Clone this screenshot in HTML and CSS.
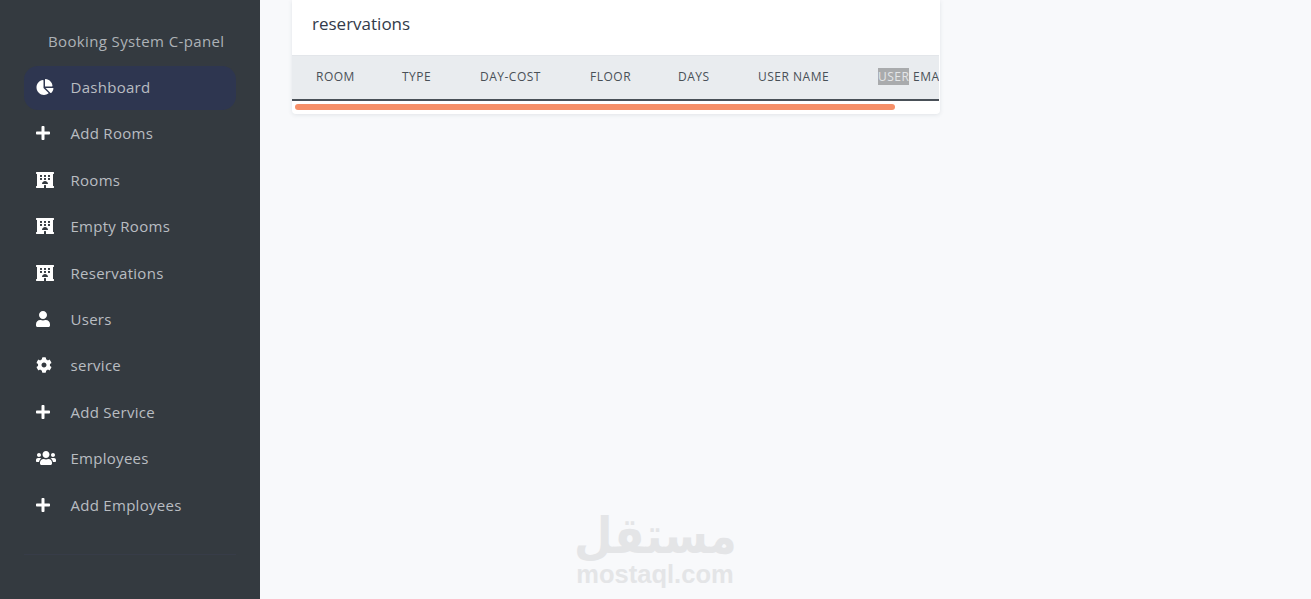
FILE: index.html
```html
<!DOCTYPE html>
<html lang="en">
<head>
<meta charset="utf-8">
<title>Booking System C-panel</title>
<link rel="stylesheet" href="styles.css">
</head>
<body>
<svg class="defs" width="0" height="0" aria-hidden="true">
  <defs>
    <symbol id="i-chart" viewBox="0 0 544 512"><path d="M527.79 288H290.5l158.03 158.03c6.04 6.04 15.98 6.53 22.19.68 38.7-36.46 65.32-85.61 73.13-140.86 1.34-9.46-6.51-17.85-16.06-17.85zm-15.83-64.8C503.72 103.74 408.26 8.28 288.8.04 279.68-.59 272 7.1 272 16.24V240h223.77c9.14 0 16.82-7.68 16.19-16.8zM224 288V50.71c0-9.55-8.39-17.4-17.84-16.06C86.99 51.49-4.1 155.6.14 280.37 4.5 408.51 114.83 513.59 243.03 511.98c50.4-.63 96.97-16.87 135.26-44.03 7.9-5.6 8.42-17.23 1.57-24.08L224 288z"/></symbol>
    <symbol id="i-plus" viewBox="0 0 448 512"><path d="M416 208H272V64c0-17.67-14.33-32-32-32h-32c-17.67 0-32 14.33-32 32v144H32c-17.67 0-32 14.33-32 32v32c0 17.67 14.33 32 32 32h144v144c0 17.67 14.33 32 32 32h32c17.67 0 32-14.33 32-32V304h144c17.67 0 32-14.33 32-32v-32c0-17.67-14.33-32-32-32z"/></symbol>
    <symbol id="i-hotel" viewBox="0 0 576 512"><path d="M560 64c8.84 0 16-7.16 16-16V16c0-8.84-7.16-16-16-16H16C7.16 0 0 7.16 0 16v32c0 8.84 7.16 16 16 16h15.98v384H16c-8.84 0-16 7.16-16 16v32c0 8.84 7.16 16 16 16h240v-80c0-8.8 7.2-16 16-16h32c8.8 0 16 7.2 16 16v80h240c8.84 0 16-7.16 16-16v-32c0-8.84-7.16-16-16-16h-16V64h16zm-304 44.8c0-6.4 6.4-12.8 12.8-12.8h38.4c6.4 0 12.8 6.4 12.8 12.8v38.4c0 6.4-6.4 12.8-12.8 12.8h-38.4c-6.4 0-12.8-6.4-12.8-12.8v-38.4zm0 96c0-6.4 6.4-12.8 12.8-12.8h38.4c6.4 0 12.8 6.4 12.8 12.8v38.4c0 6.4-6.4 12.8-12.8 12.8h-38.4c-6.4 0-12.8-6.4-12.8-12.8v-38.4zm-128-96c0-6.4 6.4-12.8 12.8-12.8h38.4c6.4 0 12.8 6.4 12.8 12.8v38.4c0 6.4-6.4 12.8-12.8 12.8h-38.4c-6.4 0-12.8-6.4-12.8-12.8v-38.4zM179.2 256h-38.4c-6.4 0-12.8-6.4-12.8-12.8v-38.4c0-6.4 6.4-12.8 12.8-12.8h38.4c6.4 0 12.8 6.4 12.8 12.8v38.4c0 6.4-6.4 12.8-12.8 12.8zM192 384c0-53.02 42.98-96 96-96s96 42.98 96 96H192zm256-140.8c0 6.4-6.4 12.8-12.8 12.8h-38.4c-6.4 0-12.8-6.4-12.8-12.8v-38.4c0-6.4 6.4-12.8 12.8-12.8h38.4c6.4 0 12.8 6.4 12.8 12.8v38.4zm0-96c0 6.4-6.4 12.8-12.8 12.8h-38.4c-6.4 0-12.8-6.4-12.8-12.8v-38.4c0-6.4 6.4-12.8 12.8-12.8h38.4c6.4 0 12.8 6.4 12.8 12.8v38.4z"/></symbol>
    <symbol id="i-user" viewBox="0 0 448 512"><path d="M224 256c70.7 0 128-57.3 128-128S294.7 0 224 0 96 57.3 96 128s57.3 128 128 128zm89.6 32h-16.7c-22.2 10.2-46.9 16-72.9 16s-50.6-5.8-72.9-16h-16.7C60.2 288 0 348.2 0 422.4V464c0 26.5 21.5 48 48 48h352c26.5 0 48-21.5 48-48v-41.6c0-74.2-60.2-134.4-134.4-134.4z"/></symbol>
    <symbol id="i-cog" viewBox="0 0 512 512"><path d="M487.4 315.7l-42.6-24.6c4.3-23.2 4.3-47 0-70.2l42.6-24.6c4.9-2.8 7.1-8.6 5.5-14-11.1-35.6-30-67.8-54.7-94.6-3.8-4.1-10-5.1-14.8-2.3L380.8 110c-17.9-15.4-38.5-27.3-60.8-35.1V25.8c0-5.6-3.9-10.5-9.4-11.7-36.7-8.2-74.3-7.8-109.2 0-5.5 1.2-9.4 6.1-9.4 11.7V75c-22.2 7.9-42.8 19.8-60.8 35.1L88.7 85.5c-4.9-2.8-11-1.9-14.8 2.3-24.7 26.7-43.6 58.9-54.7 94.6-1.7 5.4.6 11.2 5.5 14L67.3 221c-4.3 23.2-4.3 47 0 70.2l-42.6 24.6c-4.9 2.8-7.1 8.6-5.5 14 11.1 35.6 30 67.8 54.7 94.6 3.8 4.1 10 5.1 14.8 2.3l42.6-24.6c17.9 15.4 38.5 27.3 60.8 35.1v49.2c0 5.6 3.9 10.5 9.4 11.7 36.7 8.2 74.3 7.8 109.2 0 5.5-1.2 9.4-6.1 9.4-11.7v-49.2c22.2-7.9 42.8-19.8 60.8-35.1l42.6 24.6c4.9 2.8 11 1.9 14.8-2.3 24.7-26.7 43.6-58.9 54.7-94.6 1.5-5.5-.7-11.3-5.6-14.1zM256 336c-44.1 0-80-35.9-80-80s35.9-80 80-80 80 35.9 80 80-35.9 80-80 80z"/></symbol>
    <symbol id="i-users" viewBox="0 0 640 512"><path d="M96 224c35.3 0 64-28.7 64-64s-28.7-64-64-64-64 28.7-64 64 28.7 64 64 64zm448 0c35.3 0 64-28.7 64-64s-28.7-64-64-64-64 28.7-64 64 28.7 64 64 64zm32 32h-64c-17.6 0-33.5 7.1-45.1 18.6 40.3 22.1 68.9 62 75.1 109.4h66c17.7 0 32-14.3 32-32v-32c0-35.3-28.7-64-64-64zm-256 0c61.9 0 112-50.1 112-112S381.9 32 320 32 208 82.1 208 144s50.1 112 112 112zm76.8 32h-8.3c-20.8 10-43.9 16-68.5 16s-47.6-6-68.5-16h-8.3C179.6 288 128 339.6 128 403.2V432c0 26.5 21.5 48 48 48h288c26.5 0 48-21.5 48-48v-28.8c0-63.6-51.6-115.2-115.2-115.2zm-223.7-13.4C161.5 263.1 145.6 256 128 256H64c-35.3 0-64 28.7-64 64v32c0 17.7 14.3 32 32 32h65.9c6.3-47.4 34.9-87.3 75.2-109.4z"/></symbol>
  </defs>
</svg>
<div class="app">
  <aside class="sidebar">
    <div class="brand">Booking System C-panel</div>
    <nav class="nav">
      <a class="nav-item active"><span class="nav-icon"><svg class="w-chart"><use href="#i-chart"/></svg></span>Dashboard</a>
      <a class="nav-item"><span class="nav-icon"><svg class="w-plus"><use href="#i-plus"/></svg></span>Add Rooms</a>
      <a class="nav-item"><span class="nav-icon"><svg class="w-hotel"><use href="#i-hotel"/></svg></span>Rooms</a>
      <a class="nav-item"><span class="nav-icon"><svg class="w-hotel"><use href="#i-hotel"/></svg></span>Empty Rooms</a>
      <a class="nav-item"><span class="nav-icon"><svg class="w-hotel"><use href="#i-hotel"/></svg></span>Reservations</a>
      <a class="nav-item"><span class="nav-icon"><svg class="w-plus"><use href="#i-user"/></svg></span>Users</a>
      <a class="nav-item"><span class="nav-icon"><svg class="w-cog"><use href="#i-cog"/></svg></span>service</a>
      <a class="nav-item"><span class="nav-icon"><svg class="w-plus"><use href="#i-plus"/></svg></span>Add Service</a>
      <a class="nav-item"><span class="nav-icon"><svg class="w-users"><use href="#i-users"/></svg></span>Employees</a>
      <a class="nav-item"><span class="nav-icon"><svg class="w-plus"><use href="#i-plus"/></svg></span>Add Employees</a>
    </nav>
    <hr class="side-rule">
  </aside>
  <main class="main">
    <section class="card">
      <h2 class="card-title">reservations</h2>
      <div class="table-wrap">
        <table class="table">
          <colgroup>
            <col class="c1"><col class="c2"><col class="c3"><col class="c4"><col class="c5"><col class="c6"><col class="c7">
          </colgroup>
          <thead>
            <tr>
              <th>Room</th><th>Type</th><th>Day-Cost</th><th>Floor</th><th>Days</th><th>User Name</th><th><span class="picked">User</span> Email</th>
            </tr>
          </thead>
        </table>
      </div>
      <div class="scrollbar"></div>
    </section>
    <div class="watermark" aria-label="mostaql.com">
      <div class="wm-ar" lang="ar" dir="rtl">مستقل</div>
      <div class="wm-en">mostaql.com</div>
    </div>
  </main>
</div>
</body>
</html>
```
FILE: styles.css
```css
* { box-sizing: border-box; }
html, body { margin: 0; height: 100%; }
body {
  font-family: "Open Sans", "Noto Sans", sans-serif;
  background: #f8f9fb;
  overflow: hidden;
}
.defs { position: absolute; }
.app { display: flex; height: 599px; }
.sidebar {
  width: 260px;
  flex: none;
  background: #343a40;
  padding: 30px 24px 0;
}
.brand {
  height: 22px;
  line-height: 22px;
  padding-left: 24px;
  font-size: 15px;
  letter-spacing: 0.37px;
  color: #adb2b7;
  white-space: nowrap;
}
.nav { display: flex; flex-direction: column; margin-top: 14px; }
.nav-item {
  display: flex;
  align-items: center;
  height: 44px;
  margin-bottom: 2.4px;
  padding: 0 0 2px 12px;
  border-radius: 14px;
  font-size: 15px;
  letter-spacing: 0.28px;
  color: #b9bdc2;
  white-space: nowrap;
}
.nav-item.active { background: #2e3650; }
.nav-icon {
  display: flex;
  align-items: center;
  width: 34.5px;
  height: 18px;
  flex: none;
}
.nav-icon svg { height: 16px; fill: #fff; display: block; }
.w-chart { width: 18px; }
.w-plus { width: 14px; }
.w-hotel { width: 18px; }
.w-cog { width: 16px; }
.w-users { width: 20px; }
.side-rule {
  margin: 24px 0 0;
  border: 0;
  height: 1px;
  background: #373c48;
}
.main { flex: 1; position: relative; min-width: 0; padding-left: 32px; }
.card {
  width: 648px;
  height: 114px;
  background: #fff;
  border-radius: 0 0 4px 4px;
  box-shadow: 0 1px 4px rgba(60, 70, 90, .12);
  display: flex;
  flex-direction: column;
}
.card-title {
  margin: 0;
  height: 55px;
  padding: 13px 20px 0;
  font-size: 17px;
  line-height: 22px;
  font-weight: 400;
  color: #333b4a;
}
.table-wrap { overflow: hidden; height: 46px; margin-right: 1px; }
.table {
  border-collapse: separate;
  border-spacing: 0;
  table-layout: fixed;
  width: 800px;
}
.c1 { width: 86px; }
.c2 { width: 78px; }
.c3 { width: 110px; }
.c4 { width: 88px; }
.c5 { width: 80px; }
.c6 { width: 120px; }
.c7 { width: 238px; }
.table th {
  height: 46px;
  padding: 0 0 3px 24px;
  background: #e9ecef;
  border-top: 1px solid #e3e6ea;
  border-bottom: 2px solid #495057;
  color: #495057;
  font-size: 12px;
  letter-spacing: 0.5px;
  font-weight: 400;
  text-align: left;
  text-transform: uppercase;
  white-space: nowrap;
}
.picked { background: #a9abad; color: #e4e6e8; }
.scrollbar {
  width: 600px;
  height: 6px;
  margin: 3px 0 0 3px;
  border-radius: 3px;
  background: #f68f68;
}
.watermark {
  position: absolute;
  left: 316px;
  top: 510px;
  width: 158px;
  color: #e4e5e7;
  display: flex;
  flex-direction: column;
  align-items: center;
}
.wm-ar {
  font-family: "DejaVu Sans", sans-serif;
  font-weight: 700;
  font-size: 50px;
  line-height: 52px;
  white-space: nowrap;
  transform: scaleX(.89);
}
.wm-en {
  font-family: "Liberation Sans", sans-serif;
  font-weight: 700;
  font-size: 25.5px;
  line-height: 24px;
  white-space: nowrap;
}
```
